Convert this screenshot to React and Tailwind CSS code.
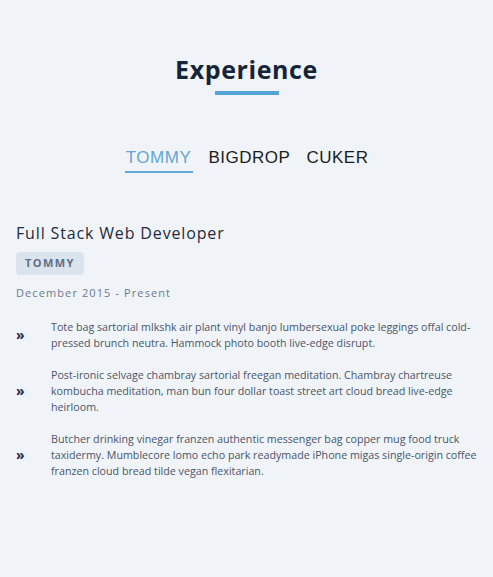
export default function App() {
  const items = [
    "Tote bag sartorial mlkshk air plant vinyl banjo lumbersexual poke leggings offal cold-pressed brunch neutra. Hammock photo booth live-edge disrupt.",
    "Post-ironic selvage chambray sartorial freegan meditation. Chambray chartreuse kombucha meditation, man bun four dollar toast street art cloud bread live-edge heirloom.",
    "Butcher drinking vinegar franzen authentic messenger bag copper mug food truck taxidermy. Mumblecore lomo echo park readymade iPhone migas single-origin coffee franzen cloud bread tilde vegan flexitarian.",
  ];
  return (
    <div className="min-h-[577px] w-full bg-[#f0f4f8] px-4 pt-[52px]" style={{ fontFamily: "'Open Sans', sans-serif" }}>
      <div className="flex flex-col items-center">
        <h2 className="text-[25px] font-bold leading-[34px] tracking-[0.6px] text-[#152439]">Experience</h2>
        <div className="mt-[5px] h-[4px] w-[64px] bg-[#54a4da]"></div>
      </div>
      <div className="mt-[53px] flex justify-center gap-[16px]" style={{ fontFamily: "'Liberation Sans', Arial, sans-serif" }}>
        <div className="flex flex-col items-center">
          <span className="text-[17px] leading-[20px] tracking-[0.5px] text-[#64a6d7]">TOMMY</span>
          <div className="mt-[3px] h-[2px] w-[68px] bg-[#64a6d7]"></div>
        </div>
        <span className="text-[17px] leading-[20px] tracking-[0.5px] text-[#1c1c1c]">BIGDROP</span>
        <span className="text-[17px] leading-[20px] tracking-[0.5px] text-[#1c1c1c]">CUKER</span>
      </div>
      <div className="mt-[49px]">
        <h3 className="text-[16px] leading-[22px] tracking-[0.85px] text-[#1e2a3b]">Full Stack Web Developer</h3>
        <div className="mt-[8px] inline-flex h-[23px] items-center rounded-[4px] bg-[#dbe3ec] px-[9px] text-[11px] font-bold tracking-[1.4px] text-[#5f6f84]">TOMMY</div>
        <p className="mt-[10px] text-[11px] leading-[16px] tracking-[1.1px] text-[#6b7a8d]">December 2015 - Present</p>
        <ul className="mt-[18px] flex flex-col gap-[16px]">
          {items.map((t, i) => (
            <li key={i} className="flex items-center">
              <span className="w-[35px] shrink-0 text-[14px] font-bold leading-none text-[#1e2a3b]">»</span>
              <span className="text-[10.7px] leading-[16px] text-[#4a5568]">{t}</span>
            </li>
          ))}
        </ul>
      </div>
    </div>
  );
}
